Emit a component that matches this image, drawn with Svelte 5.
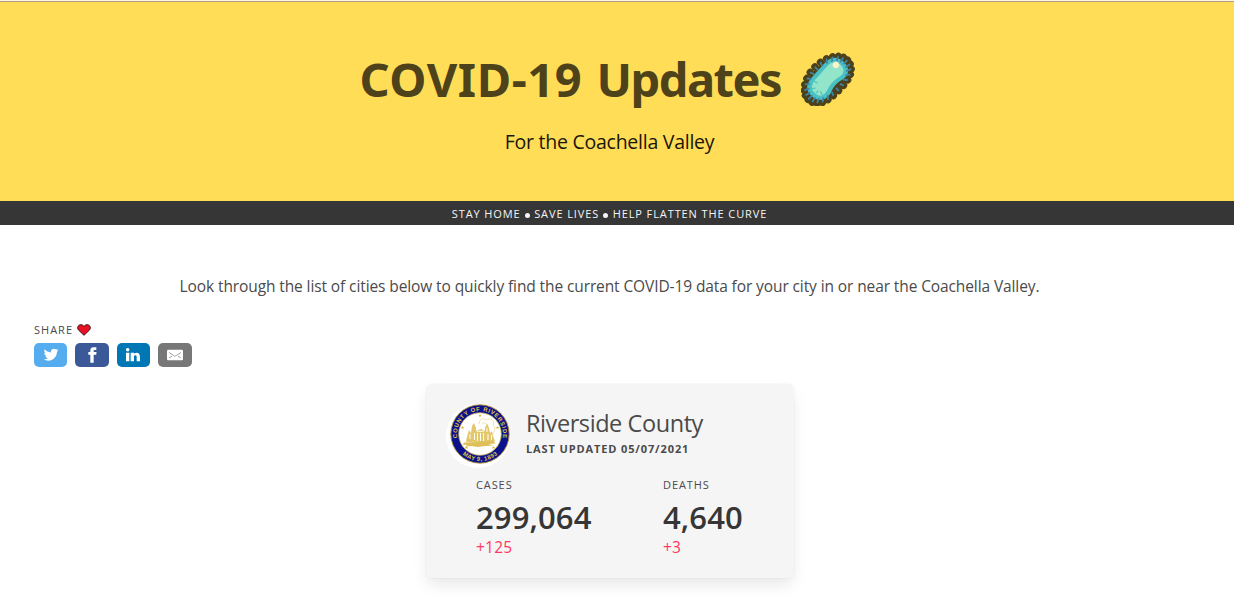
<script>
  const bumps = Array.from({ length: 24 }, (_, i) => {
    const a = (i / 24) * Math.PI * 2;
    const s = Math.sin(a);
    return { x: 29 * Math.cos(a), y: 19 * s - (s > 0 ? 3 * Math.pow(s, 4) : 0) };
  });
  const stats = [
    { label: 'Cases', value: '299,064', change: '+125' },
    { label: 'Deaths', value: '4,640', change: '+3' }
  ];
  const star = 'M0-2.4L.6-.7 2.3-.7 1 .4 1.5 2.1 0 1.1-1.5 2.1-1 .4-2.3-.7-.6-.7Z';
</script>

<div class="rule"></div>
<header>
  <h1>
    <span class="title"><span class="name">COVID-19</span> <span class="updates">Updates</span></span>
    <svg class="microbe" viewBox="0 0 56 56" aria-hidden="true">
      <g transform="translate(26.800 29.800) rotate(-45) scale(.96)">
        <g fill="#4b421b">
          {#each bumps as b}<circle cx={b.x} cy={b.y} r="3.800" />{/each}
          <ellipse rx="28.500" ry="17" />
        </g>
        <path d="M-24 0C-24-10-18-13-10-13.500 0-14 4-14.500 12-14.500 21-14.500 25-9 25-1 25 8 19 12 12 11 5 9 0 9-8 12-17 14-24 9-24 0Z" fill="#48c0c4" />
        <g stroke="#3f83a5" stroke-width="1.900" stroke-linecap="round">
          {#each bumps as b}<line x1={b.x * 0.82} y1={b.y * 0.8} x2={b.x * 0.97} y2={b.y * 0.97} />{/each}
        </g>
        <path d="M-20 0C-20-7-15-9.500-9-10 1-10 5-11 12-11 18-11 21-6 21-1 21 5 17 8 12 7 4 5-1 5-9 8-16 10-20 6-20 0Z" fill="#93e5c9" stroke="#48c0c4" />
        <ellipse cx="17" cy="-5" rx="3.400" ry="3.300" fill="#fff3c9" />
        <path d="M-18-5l3 2M-19 1h4M-15 7l1-4M-11-9l1 4" stroke="#50c2bd" stroke-width="1.200" fill="none" />
      </g>
    </svg>
  </h1>
  <p class="subtitle">For the Coachella Valley</p>
</header>
<div class="notice"><span>STAY HOME <i></i> SAVE LIVES <i></i> HELP FLATTEN THE CURVE</span></div>

<main>
  <p class="intro"><span>Look through the list of cities below to quickly find the current COVID-19 data for your city in or near the Coachella Valley.</span></p>

  <section class="share">
    <div class="share-title">
      <span>SHARE</span>
      <svg width="14" height="13" viewBox="0 0 14 13" aria-hidden="true">
        <path d="M7 12.300L1.500 7C-.300 4.900 1 1.700 3.800 1.700 5.400 1.700 6.500 2.500 7 3.500 7.500 2.500 8.600 1.700 10.200 1.700 13 1.700 14.300 4.900 12.500 7Z" fill="#e81224" stroke="#3a1010" stroke-width="1" />
      </svg>
    </div>
    <div class="buttons">
      <a class="twitter" href="#twitter" aria-label="Twitter"><svg viewBox="0 0 24 24"><path d="M23.440 4.830c-.8.370-1.500.380-2.220.020.930-.560.980-.960 1.320-2.020-.880.520-1.860.900-2.900 1.100-.820-.880-2-1.430-3.300-1.430-2.500 0-4.550 2.040-4.550 4.540 0 .360.030.700.100 1.040-3.770-.200-7.120-2-9.360-4.750-.400.670-.600 1.450-.600 2.300 0 1.560.800 2.950 2 3.770-.740-.030-1.440-.230-2.050-.570v.060c0 2.200 1.560 4.030 3.640 4.440-.670.200-1.370.200-2.060.080.580 1.800 2.260 3.120 4.250 3.160C5.780 18.100 3.370 18.740 1 18.460c2 1.300 4.400 2.040 6.970 2.040 8.350 0 12.920-6.920 12.920-12.930 0-.200 0-.400-.020-.600.900-.630 1.960-1.220 2.560-2.140z" /></svg></a>
      <a class="facebook" href="#facebook" aria-label="Facebook"><svg viewBox="0 0 24 24"><path d="M18.770 7.460H14.500v-1.900c0-.900.600-1.100 1-1.100h3V.500h-4.330C10.240.500 9.500 3.440 9.500 5.320v2.150h-3v4h3v12h5v-12h3.850l.420-4z" /></svg></a>
      <a class="linkedin" href="#linkedin" aria-label="LinkedIn"><svg viewBox="0 0 24 24"><path d="M6.500 21.500h-5v-13h5v13zM4 6.500C2.500 6.500 1.500 5.300 1.500 4s1-2.400 2.500-2.400c1.600 0 2.500 1 2.600 2.500 0 1.400-1 2.500-2.600 2.500zm11.500 6c-1 0-2 1-2 2v7h-5v-13h5V10s1.600-1.500 4-1.500c3 0 5 2.200 5 6.300v6.700h-5v-7c0-1-1-2-2-2z" /></svg></a>
      <a class="email" href="#email" aria-label="Email"><svg viewBox="0 0 24 24"><path d="M22 4H2C.900 4 0 4.900 0 6v12c0 1.100.900 2 2 2h20c1.100 0 2-.900 2-2V6c0-1.100-.900-2-2-2zM7.250 14.430l-3.500 2c-.080.050-.170.070-.250.070-.170 0-.340-.100-.430-.250-.140-.240-.060-.550.180-.680l3.500-2c.240-.140.550-.060.680.180.140.240.060.550-.180.680zm4.750.070c-.100 0-.200-.030-.270-.080l-8.500-5.500c-.230-.150-.300-.460-.150-.700.150-.220.460-.300.700-.140L12 13.400l8.230-5.320c.230-.150.540-.080.700.150.140.230.070.540-.160.700l-8.500 5.500c-.080.040-.170.070-.270.070zm8.930 1.750c-.100.160-.260.250-.430.250-.080 0-.170-.020-.250-.070l-3.500-2c-.240-.130-.320-.440-.180-.680s.440-.320.680-.180l3.500 2c.240.130.320.440.180.680z" /></svg></a>
    </div>
  </section>

  <article class="card">
    <div class="card-head">
      <svg class="seal" viewBox="0 0 64 64">
        <defs>
          <path id="arc-top" d="M11.800 36A23 23 0 1 1 56.200 36" />
          <path id="arc-bottom" d="M7 30A27 27 0 0 0 61 30" />
        </defs>
        <circle cx="32" cy="32" r="32" fill="#fff" />
        <circle cx="34" cy="30" r="29.200" fill="#0b128c" stroke="#b99b3a" stroke-width=".9" />
        <circle cx="34" cy="30" r="21.300" fill="#fff" stroke="#b9a44e" stroke-width=".8" />
        <g class="seal-text">
          <text><textPath href="#arc-top" startOffset="50%" text-anchor="middle" textLength="80">COUNTY OF RIVERSIDE</textPath></text>
          <text><textPath href="#arc-bottom" startOffset="50%" text-anchor="middle" textLength="38">MAY 9, 1893</textPath></text>
        </g>
        <g fill="#dcb62e">
          {#each [[34, 11.500], [16.500, 23.500], [51.500, 23.500], [20.500, 43.500], [47.500, 43.500]] as p}
            <path d={star} transform="translate({p[0]} {p[1]}) scale(.75)" />
          {/each}
        </g>
        <g fill="#d9b43b">
          <path d="M20 37l2-8 1-3 2 3 1-7 2-3 2 5v3l5-2 4 2v-3l2-5 2 5 1 5 2-2 1 5 2 5-2 1H21z" opacity=".75" />
          <path d="M18 38.500l30-1 1.500 2-7 .5 5 1.500-8 .5-8 1-6-1-7 .5 3-1.500-5-.5z" opacity=".85" />
        </g>
        <g fill="none" stroke="#fffdf0" stroke-width="1">
          <path d="M24 30v5M28.500 29v7M31.500 29v8M34.500 29v8M37.500 29v8M41 24v4M42 30v6M45.500 31v5M31 27.300h7" />
        </g>
        <path d="M33 20c0-4 4-7 7-4 5-3 9 1 7 5 3 2 2 6 0 9M36 20c2-2 3-1 4 0" fill="none" stroke="#ead791" stroke-width=".7" />
      </svg>
      <div>
        <h2><span>Riverside County</span></h2>
        <p class="updated"><span>LAST UPDATED 05/07/2021</span></p>
      </div>
    </div>
    <div class="stats">
      {#each stats as s}
        <div class="stat">
          <p class="label">{s.label}</p>
          <p class="value">{s.value}</p>
          <p class="change">{s.change}</p>
        </div>
      {/each}
    </div>
  </article>
</main>

<style>
  :global(body) { margin: 0; background: #fff; color: #4a4a4a; font-family: "Open Sans", "Noto Sans", sans-serif; }
  h1, h2, p { margin: 0; font-weight: 400; }
  svg { display: block; flex: none; }
  .rule { height: 2px; box-sizing: border-box; background: #fff8e4; border-bottom: 1px solid #b59a7b; }
  header { height: 199px; box-sizing: border-box; padding: 48px 15px 0 0; background: #ffdd57; text-align: center; }
  h1 { display: flex; justify-content: center; height: 58px; color: #4d421a; }
  .title { width: 425px; margin-right: 16px; text-align: left; white-space: nowrap; font: 700 47px/58px "Noto Sans", sans-serif; }
  .name { letter-spacing: .6px; }
  .updates { margin-left: 2px; letter-spacing: -1.500px; }
  .microbe { width: 56px; height: 56px; margin-right: 3px; }
  .subtitle { margin-top: 19px; font-size: 19.500px; line-height: 30px; color: #1a1609; letter-spacing: -.25px; }
  .notice { height: 24px; box-sizing: border-box; padding-right: 15px; background: #363636; color: #f5f5f5; text-align: center; font-size: 11px; line-height: 25px; letter-spacing: .9px; }
  .notice i { display: inline-block; width: 5px; height: 5px; margin: 0 .5px; border-radius: 50%; background: #f5f5f5; }
  main { padding: 0 15px 19px 0; }
  .intro { padding-top: 49px; text-align: center; font-size: 15.500px; line-height: 24px; letter-spacing: -.105px; white-space: nowrap; }
  .share { padding: 21px 0 0 34px; }
  .share-title { display: flex; gap: 4px; align-items: center; height: 20px; font-size: 11px; letter-spacing: 1px; }
  .buttons { display: flex; gap: 8px; margin-top: 4px; }
  .buttons a { display: grid; place-items: center; width: 33.400px; height: 24px; border-radius: 5px; }
  .buttons svg { width: 16px; height: 16px; fill: #fff; }
  .twitter { background: #55acee; }
  .facebook { background: #3b5998; }
  .linkedin { background: #0077b5; }
  .email { background: #777; }
  .card { width: 368px; height: 194px; box-sizing: border-box; margin: 17px auto 0; padding: 20px 20px 0 20.500px; border-radius: 6px; background: #f5f5f5; box-shadow: 0 8px 16px -2px rgba(10, 10, 10, .1), 0 0 0 1px rgba(10, 10, 10, .02); }
  .card-head { display: flex; gap: 16px; height: 64px; }
  .seal { width: 64px; height: 64px; }
  .seal-text { fill: #e3c83f; font: 700 5.800px "Liberation Sans", sans-serif; }
  h2 { padding-top: 2px; font-size: 23.500px; line-height: 34px; letter-spacing: -.42px; }
  .updated { margin-top: 1px; font-size: 11px; line-height: 16px; font-weight: 700; letter-spacing: .88px; }
  .stats { display: grid; grid-template-columns: 187px 1fr; padding: 9px 0 0 30px; }
  .label { font-size: 11px; line-height: 16px; letter-spacing: .9px; text-transform: uppercase; }
  .value { margin-top: 7px; color: #363636; font-size: 31px; line-height: 34px; font-weight: 600; letter-spacing: .1px; }
  .change { margin-top: 2px; color: #ff3860; font-size: 15.500px; line-height: 22px; letter-spacing: .25px; }
</style>
